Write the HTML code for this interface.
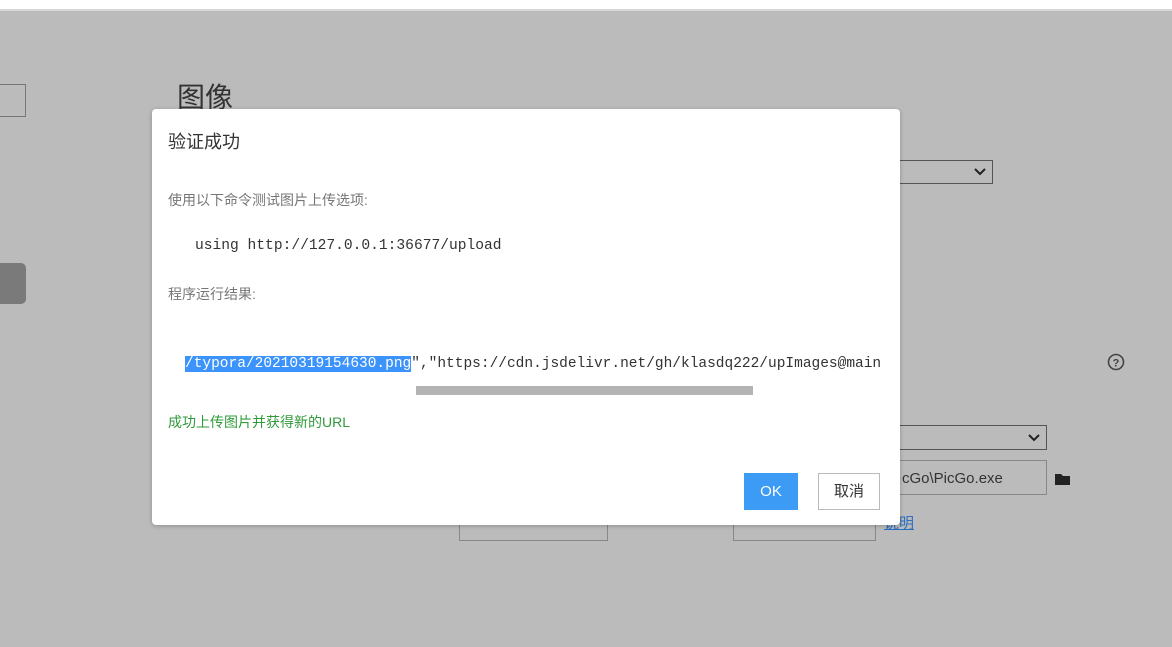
<!DOCTYPE html>
<html><head><meta charset="utf-8"><style>
*{margin:0;padding:0;box-sizing:border-box}
body{width:1172px;height:647px;background:#bbbbbb;position:relative;overflow:hidden;font-family:"Liberation Sans","Noto Sans CJK SC",sans-serif}
.a{position:absolute}
.mono{font-family:"Liberation Mono","Noto Sans CJK SC",monospace;font-size:14.5px;color:#333}
</style></head><body>
<div class="a" style="left:0;top:0;width:1172px;height:9px;background:#fff"></div>
<div class="a" style="left:0;top:9px;width:1172px;height:2px;background:#d8d8d8"></div>
<div class="a" style="left:-2px;top:84px;width:28px;height:33px;border:1px solid #777"></div>
<div class="a" style="left:-6px;top:263px;width:32px;height:41px;background:#7a7a7a;border-radius:5px"></div>
<div class="a" style="left:177px;top:76px;font-size:28px;color:#333">图像</div>
<div class="a" style="left:880px;top:160px;width:113px;height:24px;border:1px solid #555"></div>
<svg class="a" style="left:973px;top:166px" width="14" height="12"><path d="M2 3l5 5 5-5" stroke="#222" stroke-width="2" fill="none"/></svg>
<svg class="a" style="left:1107px;top:353px" width="18" height="18"><circle cx="9" cy="9" r="7.5" stroke="#444" stroke-width="1.6" fill="none"/><text x="9" y="13.5" font-size="11" font-weight="bold" text-anchor="middle" fill="#444" font-family="Liberation Sans">?</text></svg>
<div class="a" style="left:880px;top:425px;width:167px;height:25px;border:1px solid #555"></div>
<svg class="a" style="left:1027px;top:432px" width="14" height="12"><path d="M2 3l5 5 5-5" stroke="#222" stroke-width="2" fill="none"/></svg>
<div class="a" style="left:880px;top:460px;width:167px;height:35px;border:1px solid #888;font-size:15px;color:#333;padding:9px 0 0 21px">cGo\PicGo.exe</div>
<svg class="a" style="left:1055px;top:472px" width="16" height="13"><path d="M0 2h6l2 2h7v9H0z" fill="#222"/></svg>
<div class="a" style="left:459px;top:505px;width:149px;height:36px;border:1px solid #888"></div>
<div class="a" style="left:733px;top:505px;width:143px;height:36px;border:1px solid #888"></div>
<div class="a" style="left:884px;top:512px;font-size:15px;color:#2a6fc0;text-decoration:underline">说明</div>
<div class="a" style="left:152px;top:109px;width:748px;height:416px;background:#fff;border-radius:4px;box-shadow:0 1px 4px rgba(0,0,0,.25);overflow:hidden">
 <div class="a" style="left:16px;top:19px;font-size:18px;color:#333">验证成功</div>
 <div class="a" style="left:16px;top:81px;font-size:14px;color:#777">使用以下命令测试图片上传选项:</div>
 <div class="a mono" style="left:43px;top:129px;font-size:14.6px">using http://127.0.0.1:36677/upload</div>
 <div class="a" style="left:16px;top:175px;font-size:14px;color:#777">程序运行结果:</div>
 <div class="a mono" style="left:33px;top:244px;white-space:nowrap;line-height:22px"><span style="background:#3b93fb;color:#fff">/typora/20210319154630.png</span>","https://cdn.jsdelivr.net/gh/klasdq222/upImages@main</div>
 <div class="a" style="left:264px;top:277px;width:337px;height:9px;background:#b3b3b3"></div>
 <div class="a" style="left:16px;top:303px;font-size:14px;color:#2f9a3a">成功上传图片并获得新的URL</div>
 <div class="a" style="left:592px;top:364px;width:54px;height:37px;background:#3c9cf5;color:#fff;font-size:15px;text-align:center;line-height:37px">OK</div>
 <div class="a" style="left:666px;top:364px;width:62px;height:37px;border:1px solid #bbb;color:#333;font-size:15px;text-align:center;line-height:35px">取消</div>
</div>
</body></html>
